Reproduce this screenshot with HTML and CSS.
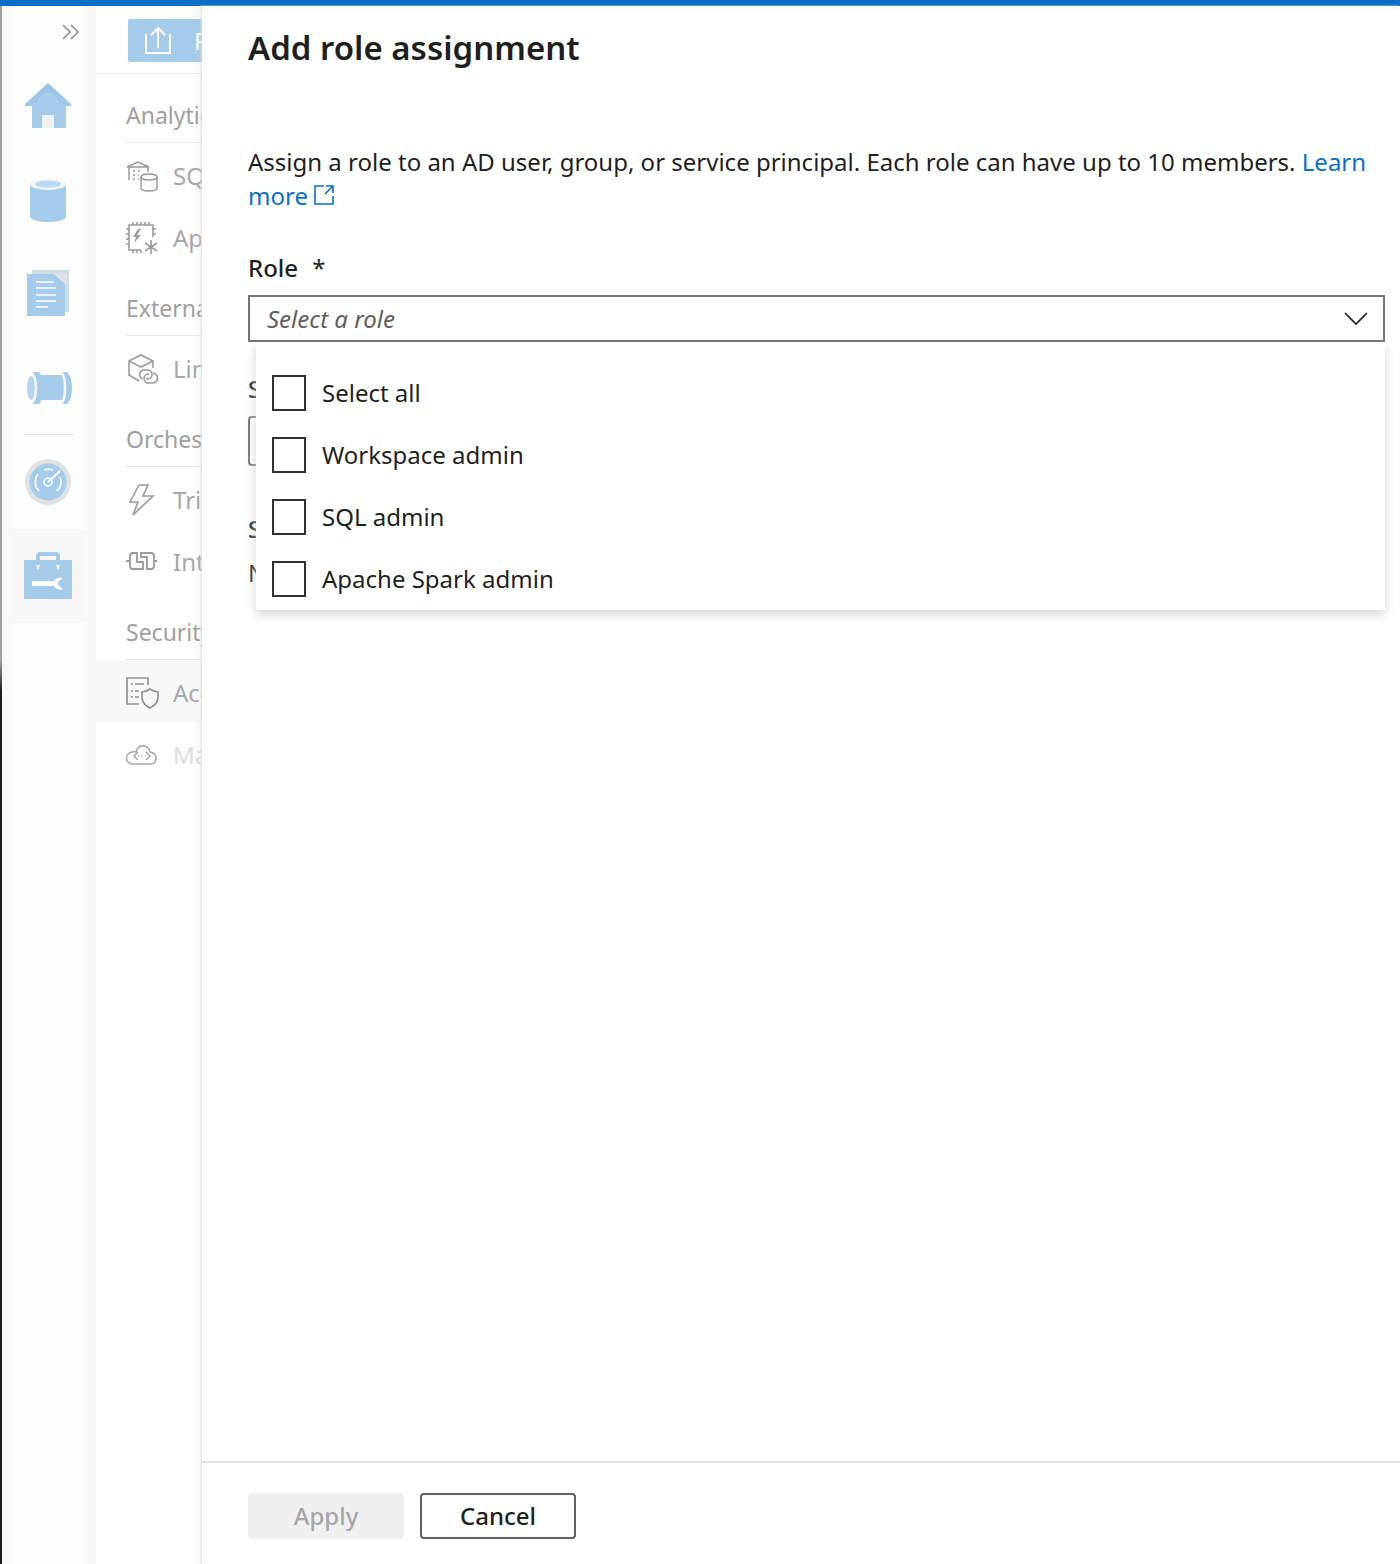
FILE: index.html
```html
<!DOCTYPE html>
<html lang="en">
<head>
<meta charset="utf-8">
<meta name="viewport" content="width=device-width, initial-scale=1">
<title>Add role assignment</title>
<link rel="stylesheet" href="styles.css">
</head>
<body>
<div class="app">
  <nav class="rail" aria-label="Hubs">
    <button class="rail-expand" type="button" aria-label="Expand">
      <svg width="20" height="18" viewBox="0 0 20 18" fill="none" stroke="#8e8e8e" stroke-width="1.5"><path d="M2 2l7 7-7 7M10 2l7 7-7 7"/></svg>
    </button>
    <a class="rail-item" href="#home" aria-label="Home">
      <svg width="48" height="48" viewBox="0 0 48 48"><path fill="#a5cbeb" d="M24 2 42 19v27H30V33H18v13H8V19z"/><path fill="#f1f1f1" d="M18 33h12v13H18z"/><path fill="#9cc5e8" d="M24 1 47 22q1 2-2 2h-4L24 8 7 24H3q-3 0-2-2z"/></svg>
    </a>
    <a class="rail-item" href="#data" aria-label="Data">
      <svg width="48" height="48" viewBox="0 0 48 48"><path fill="#a5cbeb" d="M6 8v32c0 8 36 8 36 0V8z"/><ellipse cx="24" cy="8" rx="18" ry="6" fill="#f4f4f4"/><ellipse cx="24" cy="8" rx="13" ry="3.5" fill="#b9d7ef"/></svg>
    </a>
    <a class="rail-item" href="#develop" aria-label="Develop">
      <svg width="48" height="48" viewBox="0 0 48 48"><path fill="#cfdde9" d="M8 0h37v42H8z"/><path fill="#a5cbeb" d="M3 4h27l11 10v32H3z"/><path fill="#dfe3e6" d="M30 4h13v10h-2z"/><path stroke="#fff" stroke-width="1.6" d="M12 12h18M12 18h20M12 25h20M12 31h20M12 37h12"/></svg>
    </a>
    <a class="rail-item rail-item-divided" href="#orchestrate" aria-label="Orchestrate">
      <svg width="48" height="48" viewBox="0 0 48 48"><path fill="#a5cbeb" d="M12 11h28v25H12z"/><ellipse cx="7" cy="24" rx="4" ry="12" fill="#b5d4ee"/><path fill="#a5cbeb" d="M8 8h5q4 0 4 4v24q0 4-4 4H8q4-6 4-16T8 8zM38 8h5q5 5 5 16t-5 16h-5q4-5 4-16T38 8z"/><path fill="none" stroke="#f7f7f7" stroke-width="2.5" d="M8 9q4 5 4 15t-4 15M38 9q3 5 3 15t-3 15"/></svg>
    </a>
    <a class="rail-item" href="#monitor" aria-label="Monitor">
      <svg width="48" height="48" viewBox="0 0 48 48"><circle cx="24" cy="24" r="23" fill="#dfe1e3"/><circle cx="24" cy="24" r="18.5" fill="#a5cbeb"/><g fill="none" stroke="#fff" stroke-width="1.5"><path d="M15 33a13 13 0 0 1-1-17M20 12a13 13 0 0 1 9 0M36 19a13 13 0 0 1-3 14"/><circle cx="24" cy="24" r="4"/><path d="M24 24 36 13" stroke-width="2"/></g></svg>
    </a>
    <a class="rail-item rail-item-active" href="#manage" aria-label="Manage">
      <svg width="48" height="48" viewBox="0 0 48 48"><path fill="none" stroke="#a5cbeb" stroke-width="4" d="M14 10V4q0-2 2-2h16q2 0 2 2v6"/><rect x="0" y="8" width="48" height="39" rx="1" fill="#a5cbeb"/><path fill="#fff" d="M12 13h4l-2 5zM32 13h4l-2 5zM8 29h22q3-5 9-3l-5 4v3l5 4q-6 2-9-3H8z"/></svg>
    </a>
  </nav>

  <nav class="menu" aria-label="Manage">
    <div class="menu-bar">
      <button class="publish" type="button">
        <svg width="28" height="28" viewBox="0 0 28 28" fill="none" stroke="#fff" stroke-width="2"><path d="M2 7v19h24V7M14 21V2M7 8l7-7 7 7"/></svg>
        <span>Publish all</span>
      </button>
    </div>
    <h2 class="menu-heading">Analytics pools</h2>
    <a class="menu-item" href="#sql-pools">
      <svg width="32" height="32" viewBox="0 0 32 32" fill="none" stroke="#9b9b9b" stroke-width="1.5"><path d="M3 20V7M1 7l11-5 11 5H1M22 7v5"/><path d="M7 11h2M12 11h2M7 15h2M12 15h1M7 19h2M12 19h1"/><ellipse cx="23" cy="17" rx="8" ry="3"/><path d="M15 17v11c0 4 16 4 16 0V17"/></svg>
      <span>SQL pools</span>
    </a>
    <a class="menu-item" href="#spark-pools">
      <svg width="32" height="32" viewBox="0 0 32 32" fill="none" stroke="#9b9b9b" stroke-width="1.6"><path d="M15 28H3V3h24v12"/><path d="M7 3V0M11 3V0M15 3V0M19 3V0M23 3V0M3 7H0M3 12H0M3 17H0M3 22H0M7 31v-3M11 31v-3M15 31v-3M27 7h3M27 12h3"/><path fill="#9b9b9b" stroke="none" d="m12 7-5 8h3l-2 6 7-8h-4l4-6z"/><path d="M25 18v14M19 21l12 8M31 21l-12 8"/></svg>
      <span>Apache Spark pools</span>
    </a>
    <h2 class="menu-heading">External connections</h2>
    <a class="menu-item" href="#linked-services">
      <svg width="32" height="32" viewBox="0 0 32 32" fill="none" stroke="#9b9b9b" stroke-width="1.6"><path d="M27 15V8L15 2 3 8v14l10 6M3 8l12 6 12-6"/><path d="M16 26a5 5 0 0 1 1-9h4a4.500 4.500 0 0 1 1 9h-2M27 20a5 5 0 0 1-1 10h-3a4.500 4.500 0 0 1-1-9h1"/></svg>
      <span>Linked services</span>
    </a>
    <h2 class="menu-heading">Orchestration</h2>
    <a class="menu-item" href="#triggers">
      <svg width="32" height="32" viewBox="0 0 32 32" fill="none" stroke="#9b9b9b" stroke-width="1.6"><path d="M13 1h9l-5 11h10L7 31l5-13H4z"/></svg>
      <span>Triggers</span>
    </a>
    <a class="menu-item" href="#runtimes">
      <svg width="32" height="32" viewBox="0 0 32 32" fill="none" stroke="#9b9b9b" stroke-width="1.8"><path d="M0 15h4M28 15h3M11 7H7Q4 7 4 10v10q0 3 3 3h10v-7h-6zM15 7h10q3 0 3 3v10q0 3-3 3h-4V11h-6z"/></svg>
      <span>Integration runtimes</span>
    </a>
    <h2 class="menu-heading">Security</h2>
    <a class="menu-item menu-item-active" href="#access" aria-current="page">
      <svg width="34" height="32" viewBox="0 0 34 32" fill="none" stroke="#929292" stroke-width="1.7"><path d="M13 27H1V1h21v7M5 7h2M9 7h9M5 14h2M9 14h4M5 20h2M9 20h4"/><path d="M24 12q4 3 8 3v5q0 7-8 11-8-4-8-11v-5q4 0 8-3z"/></svg>
      <span>Access control</span>
    </a>
    <a class="menu-item menu-item-disabled" href="#networks" aria-disabled="true">
      <svg width="32" height="32" viewBox="0 0 32 32" fill="none" stroke="#a5a9ab" stroke-width="1.5"><path d="M7 25a6 6 0 0 1-1-12q2-1 4 0 2-7 8-6 5 1 6 6 6 1 6 6 0 6-6 6z"/><path d="m12 13-4 4 4 4M20 13l4 4-4 4M12 17h1M15 17h1M19 17h1"/></svg>
      <span>Managed Virtual Networks</span>
    </a>
  </nav>

  <main class="panel">
    <h1 class="panel-title">Add role assignment</h1>
    <form class="panel-form" id="role-form">
      <p class="intro">Assign a role to an AD user, group, or service principal. Each role can have up to 10 members. <a href="#learn-more">Learn more <svg class="external" width="20" height="20" viewBox="0 0 20 20" fill="none" stroke="#0a6fc8" stroke-width="1.6"><path d="M10 1H1v18h18v-8M12 1h7v7M19 1l-8 8"/></svg></a></p>

      <div class="field">
        <label class="label" for="role">Role <span class="required">*</span></label>
        <div class="combo">
          <select class="select" id="role"><option>Select a role</option></select>
          <svg class="chevron" width="24" height="14" viewBox="0 0 24 14" fill="none" stroke="#1f1f1f" stroke-width="1.7"><path d="m1 1 11 11L23 1"/></svg>
          <div class="options" role="group" aria-label="Roles">
            <label class="option"><input class="check" type="checkbox">Select all</label>
            <label class="option"><input class="check" type="checkbox">Workspace admin</label>
            <label class="option"><input class="check" type="checkbox">SQL admin</label>
            <label class="option"><input class="check" type="checkbox">Apache Spark admin</label>
          </div>
        </div>
      </div>

      <div class="field">
        <label class="label" for="user">Select user</label>
        <input class="text-box" id="user" type="text">
      </div>

      <div class="field selection">
        <h2 class="label">Selected user</h2>
        <p>None</p>
      </div>
    </form>
    <footer class="panel-footer">
      <button class="button button-disabled" type="submit" form="role-form" disabled>Apply</button>
      <button class="button" type="button">Cancel</button>
    </footer>
  </main>
</div>
</body>
</html>
```
FILE: styles.css
```css
* {
  box-sizing: border-box;
}

body {
  margin: 0;
  color: #1f1f1f;
  background: #fff;
  font: 24px/34px "Noto Sans", "Open Sans", sans-serif;
}

h1, h2, p {
  margin: 0;
}

a {
  color: #0a6fc8;
  text-decoration: none;
}

svg {
  flex: none;
}

button, select, input {
  font: inherit;
  color: inherit;
}

.app {
  display: grid;
  grid-template-columns: 96px 106px minmax(0, 1fr);
  min-height: 100vh;
  border-top: 6px solid #0a6fc8;
}

/* Icon rail */
.rail {
  display: flex;
  flex-direction: column;
  padding: 0 10px;
  border-left: 2px solid;
  border-image: linear-gradient(#a0a0a0 42%, #1c1c1c 44%) 1;
  background: linear-gradient(90deg, #f8f8f8 8px, #fdfdfd 12px, #fdfdfd 82px, #f7f7f7 86px);
}

.rail-expand {
  display: flex;
  justify-content: flex-end;
  align-items: center;
  height: 53px;
  padding: 0 5px 2px 0;
  border: 0;
  background: none;
}

.rail-item {
  display: flex;
  justify-content: center;
  align-items: center;
  height: 94px;
  padding-right: 2px;
}

.rail-item-divided {
  background: linear-gradient(#e6e6e6, #e6e6e6) center bottom / 50px 1px no-repeat;
}

.rail-item-active {
  background: #f7f7f7;
}

/* Section menu */
.menu {
  overflow: hidden;
  color: #a0a0a0;
  white-space: nowrap;
  background: linear-gradient(90deg, #fff 94px, #f7f7f7 106px);
}

.menu-bar {
  height: 68px;
  padding: 13px 0 0 32px;
  border-bottom: 1px solid #e6e6e6;
}

.publish {
  display: flex;
  align-items: center;
  gap: 22px;
  height: 43px;
  padding: 0 16px;
  border: 0;
  border-radius: 2px;
  color: #fff;
  background: #a5cbeb;
}

.menu-heading {
  height: 69px;
  margin-left: 30px;
  padding-top: 24px;
  border-bottom: 1px solid #e6e6e6;
  font-size: 23px;
  font-weight: 400;
}

.menu-item {
  display: flex;
  align-items: center;
  gap: 15px;
  height: 62px;
  padding: 4px 0 0 30px;
  color: #a8a8a8;
}

.menu-item-active {
  gap: 13px;
  background: #f7f7f7;
}

.menu-item-disabled {
  color: #dcdcdc;
}

/* Side panel */
.panel {
  display: flex;
  flex-direction: column;
  background: #fff;
  box-shadow: -1px 0 2px #dedede;
}

.panel-title {
  padding: 20px 46px 0;
  font-size: 33px;
  line-height: 44px;
  font-weight: 600;
}

.panel-form {
  display: flex;
  flex: 1;
  flex-direction: column;
  gap: 30px;
  padding: 75px 15px 30px 46px;
}

.intro {
  margin-bottom: 8px;
}

.external {
  vertical-align: 0;
}

.field {
  display: flex;
  flex-direction: column;
  gap: 10px;
}

.selection {
  margin-top: 16px;
}

.label {
  font-size: 24px;
  font-weight: 500;
}

.required {
  margin-left: 8px;
  font-weight: 400;
}

.combo {
  display: grid;
  position: relative;
  align-items: center;
}

.select {
  grid-area: 1 / 1;
  height: 47px;
  padding: 0 48px 0 17px;
  border: 2px solid #767676;
  border-radius: 0;
  color: #606060;
  background: #fff;
  font-style: italic;
  appearance: none;
}

.chevron {
  grid-area: 1 / 1;
  justify-self: end;
  margin-right: 17px;
  pointer-events: none;
}

.options {
  position: absolute;
  top: 100%;
  left: 8px;
  right: 0;
  padding: 20px 16px 0;
  background: #fff;
  box-shadow: 0 5px 10px #d6d6d6;
  clip-path: inset(0 -16px -20px -16px);
}

.option {
  display: flex;
  align-items: center;
  gap: 16px;
  height: 62px;
}

.check {
  width: 34px;
  height: 36px;
  margin: 0;
  border: 2px solid #303030;
  background: #fff;
  appearance: none;
}

.text-box {
  height: 50px;
  padding: 0 16px;
  border: 2px solid #767676;
  border-radius: 4px;
}

.panel-footer {
  display: flex;
  gap: 16px;
  padding: 30px 46px 25px;
  border-top: 2px solid #e2e2e2;
}

.button {
  width: 156px;
  height: 46px;
  padding: 0;
  border: 2px solid #606060;
  border-radius: 4px;
  background: #fff;
  font-weight: 500;
}

.button-disabled {
  border-color: #f0f0f0;
  color: #a6a6a6;
  background: #f0f0f0;
}
```
